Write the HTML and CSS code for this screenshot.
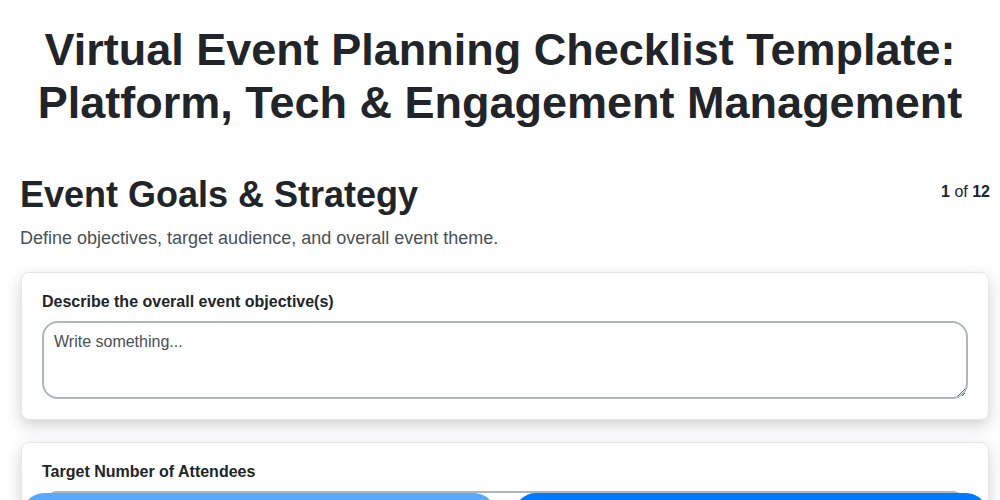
FILE: index.html
```html
<!DOCTYPE html>
<html lang="en">
<head>
<meta charset="utf-8">
<title>Virtual Event Planning Checklist Template</title>
<link rel="stylesheet" href="styles.css">
</head>
<body>
<h1 class="page-title">Virtual Event Planning Checklist Template: Platform, Tech &amp; Engagement Management</h1>
<main class="container">
  <div class="step-header">
    <h2 class="step-title">Event Goals &amp; Strategy</h2>
    <div class="step-count"><b>1</b> of <b>12</b></div>
  </div>
  <p class="step-desc">Define objectives, target audience, and overall event theme.</p>
  <div class="card">
    <label class="field-label" for="obj">Describe the overall event objective(s)</label>
    <textarea id="obj" class="field-area" placeholder="Write something..."></textarea>
  </div>
  <div class="card">
    <label class="field-label" for="att">Target Number of Attendees</label>
    <input id="att" class="field-input" type="number">
  </div>
</main>
<nav class="nav-bar">
  <button class="nav-btn prev" disabled>Previous</button>
  <button class="nav-btn next">Next</button>
</nav>
</body>
</html>
```
FILE: styles.css
```css
html, body {
  margin: 0;
  padding: 0;
  background: #ffffff;
  font-family: "Liberation Sans", Arial, sans-serif;
  color: #212529;
}
.page-title {
  margin: 23px 10px 0;
  font-size: 45px;
  line-height: 53px;
  font-weight: 700;
  text-align: center;
}
.container {
  padding: 44px 11px 80px 20px;
}
.step-header {
  display: flex;
  justify-content: space-between;
  align-items: flex-start;
}
.step-title {
  margin: 0;
  font-size: 36px;
  line-height: 43.2px;
  font-weight: 700;
}
.step-count {
  margin-top: 7px;
  margin-right: -1px;
  font-size: 16px;
  line-height: 24px;
}
.step-desc {
  margin: 9px 0 20px;
  font-size: 18px;
  line-height: 27px;
  color: #495057;
}
.card {
  margin: 0 0 22px 1px;
  padding: 20px;
  border: 1px solid #e6e7ec;
  border-radius: 8px;
  background: #fff;
  box-shadow: 0 6px 16px rgba(0, 0, 0, 0.18);
}
.field-label {
  display: block;
  margin-bottom: 10px;
  font-size: 16px;
  line-height: 18px;
  font-weight: 700;
}
.field-area, .field-input {
  display: block;
  width: 100%;
  box-sizing: border-box;
  border: 2px solid #adb5bd;
  border-radius: 16px;
  padding: 10px;
  font-family: "Liberation Sans", Arial, sans-serif;
  font-size: 16px;
  color: #212529;
  background: #fff;
}
.field-area {
  height: 78px;
  resize: vertical;
  line-height: 18px;
}
.field-area::placeholder {
  color: #495057;
}
.field-input {
  height: 44px;
}
.nav-bar {
  position: fixed;
  left: 22px;
  right: 12px;
  bottom: -37px;
  display: flex;
  gap: 18px;
}
.nav-btn {
  flex: 1;
  height: 44px;
  border: none;
  border-radius: 22px;
  font-family: "Liberation Sans", Arial, sans-serif;
  font-size: 16px;
  font-weight: 700;
  color: #fff;
  background: #007bff;
}
.nav-btn.prev {
  background: #58a8fb;
}
```
